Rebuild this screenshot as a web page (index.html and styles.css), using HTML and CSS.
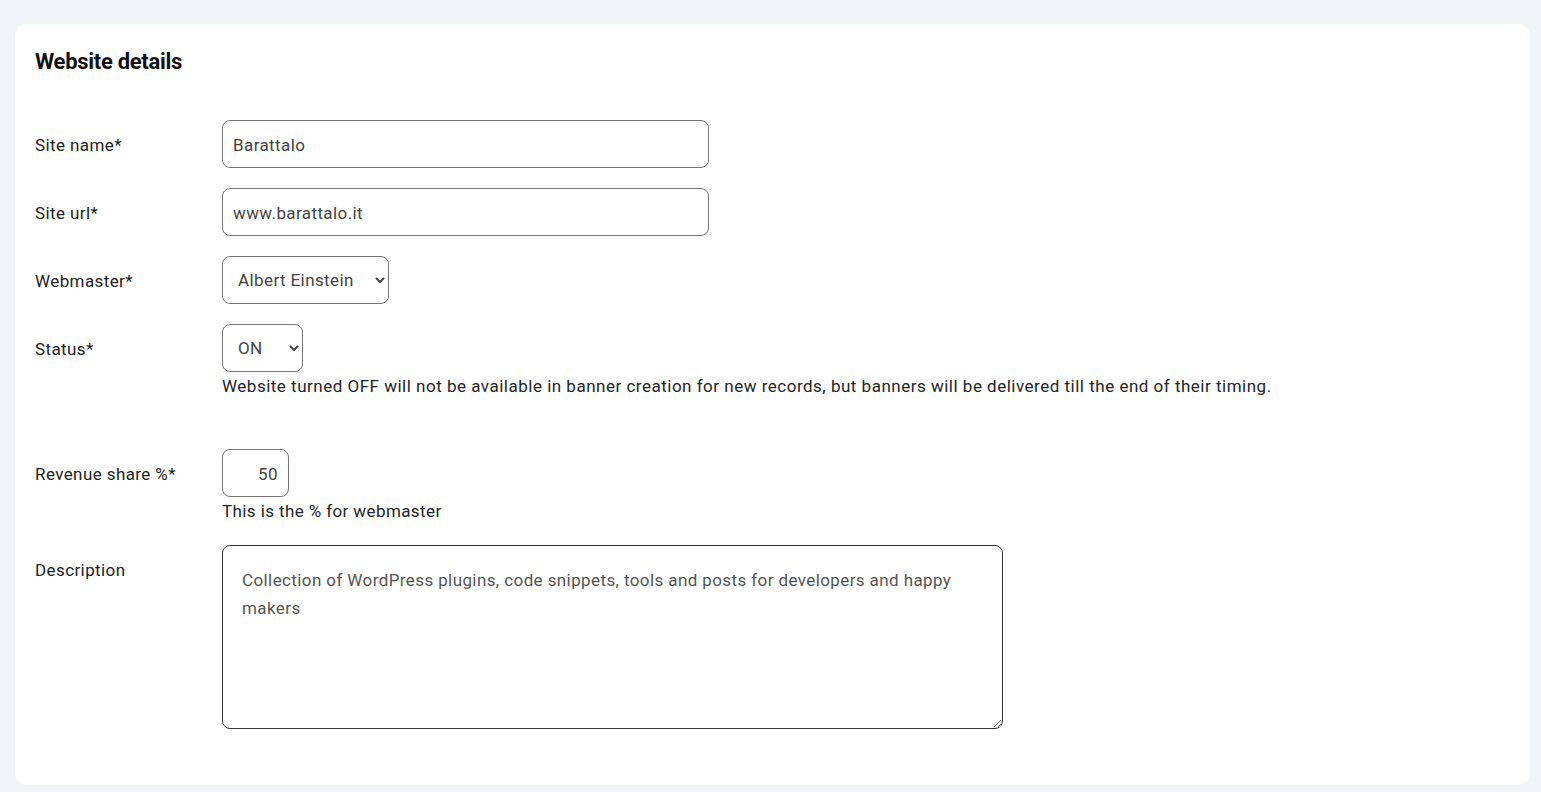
FILE: index.html
```html
<!DOCTYPE html>
<html lang="en">
<head>
<meta charset="utf-8">
<title>Website details</title>
<link rel="stylesheet" href="styles.css">
</head>
<body>
<div class="page">
  <section class="card">
    <h2 class="card-title">Website details</h2>
    <form class="form">
      <div class="row">
        <label class="label">Site name*</label>
        <div class="field"><input class="input input-wide" type="text" value="Barattalo"></div>
      </div>
      <div class="row">
        <label class="label">Site url*</label>
        <div class="field"><input class="input input-wide" type="text" value="www.barattalo.it"></div>
      </div>
      <div class="row">
        <label class="label">Webmaster*</label>
        <div class="field"><select class="select select-webmaster"><option>Albert Einstein</option></select></div>
      </div>
      <div class="row row-status">
        <label class="label">Status*</label>
        <div class="field">
          <select class="select select-status"><option>ON</option></select>
          <div class="help help-long">Website turned OFF will not be available in banner creation for new records, but banners will be delivered till the end of their timing.</div>
        </div>
      </div>
      <div class="row">
        <label class="label">Revenue share %*</label>
        <div class="field">
          <input class="input input-num" type="text" value="50">
          <div class="help">This is the % for webmaster</div>
        </div>
      </div>
      <div class="row row-desc">
        <label class="label">Description</label>
        <div class="field"><textarea class="textarea">Collection of WordPress plugins, code snippets, tools and posts for developers and happy makers</textarea></div>
      </div>
    </form>
  </section>
</div>
</body>
</html>
```
FILE: styles.css
```css
html, body {
  margin: 0;
  padding: 0;
  background: #f1f4f8;
}
body {
  font-family: Roboto, "Noto Sans", sans-serif;
  color: #212529;
  font-size: 17px;
  letter-spacing: 0.4px;
}
.page {
  padding: 24px 11px 7px 15px;
}
.card {
  background: #fff;
  border-radius: 12px;
  padding: 21px 20px 56px 20px;
  height: 761px;
  box-sizing: border-box;
}
.card-title {
  margin: 0;
  font-size: 22px;
  font-weight: 700;
  line-height: 34px;
  color: #111;
  letter-spacing: -0.3px;
}
.form {
  margin-top: 41px;
  display: flex;
  flex-direction: column;
  gap: 20px;
}
.row {
  display: grid;
  grid-template-columns: 187px 1fr;
  align-items: start;
}
.row-status {
  margin-bottom: 32px;
}
.row-desc {
  margin-top: 3px;
}
.label {
  padding-top: 14px;
  line-height: 22px;
  color: #222;
}
.field {
  display: flex;
  flex-direction: column;
  align-items: flex-start;
}
.input, .select, .textarea {
  font-family: inherit;
  font-size: 17px;
  letter-spacing: 0.4px;
  color: #444;
  border: 1px solid #767676;
  border-radius: 8px;
  background: #fff;
  box-sizing: border-box;
}
.input {
  height: 48px;
  padding: 2px 10px 0 10px;
}
.input-wide { width: 487px; }
.input-num { width: 67px; text-align: right; padding-right: 10px; }
.select {
  height: 48px;
  padding: 0 8px 0 11px;
}
.select-webmaster { width: 167px; }
.select-status { width: 81px; }
.help {
  margin-top: 3px;
  line-height: 22px;
  color: #212529;
}
.help-long {
  letter-spacing: 0.5px;
}
.textarea {
  width: 781px;
  height: 184px;
  padding: 20px 19px;
  line-height: 28px;
  color: #555;
  border-color: #333;
  resize: both;
}
```
